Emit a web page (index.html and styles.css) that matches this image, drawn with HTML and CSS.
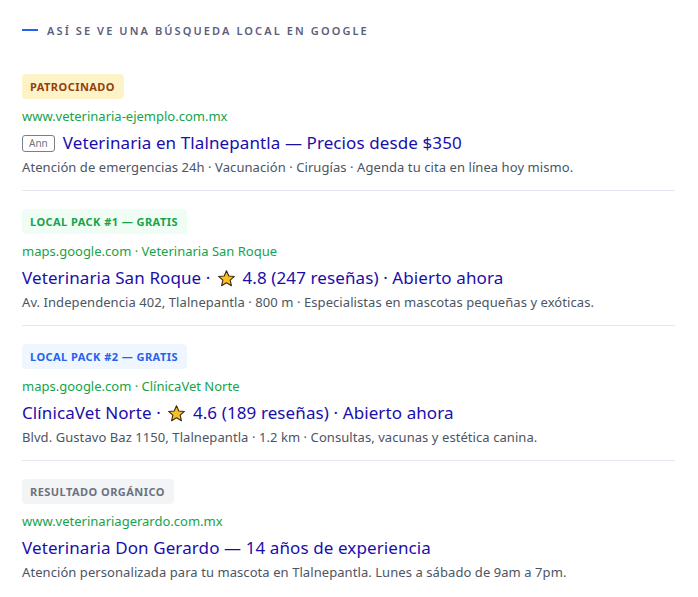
FILE: index.html
```html
<!DOCTYPE html>
<html lang="es">
<head>
<meta charset="utf-8">
<title>Búsqueda local en Google</title>
<link rel="stylesheet" href="styles.css">
</head>
<body>
<main class="serp">
  <header class="eyebrow">
    <span class="eyebrow-line"></span>
    <span class="eyebrow-text">Así se ve una búsqueda local en Google</span>
  </header>

  <section class="result">
    <span class="tag tag-ad">Patrocinado</span>
    <div class="url">www.veterinaria-ejemplo.com.mx</div>
    <h2 class="title"><span class="ad-mark">Ann</span>Veterinaria en Tlalnepantla — Precios desde $350</h2>
    <p class="desc">Atención de emergencias 24h · Vacunación · Cirugías · Agenda tu cita en línea hoy mismo.</p>
  </section>

  <section class="result">
    <span class="tag tag-pack1">Local Pack #1 — Gratis</span>
    <div class="url">maps.google.com · Veterinaria San Roque</div>
    <h2 class="title">Veterinaria San Roque · <svg class="star" viewBox="0 0 24 24"><path d="M12 2.2l2.9 6.6 7.1.6-5.4 4.7 1.6 7-6.2-3.7-6.2 3.7 1.6-7L2 9.4l7.1-.6z"/></svg> 4.8 (247 reseñas) · Abierto ahora</h2>
    <p class="desc">Av. Independencia 402, Tlalnepantla · 800 m · Especialistas en mascotas pequeñas y exóticas.</p>
  </section>

  <section class="result">
    <span class="tag tag-pack2">Local Pack #2 — Gratis</span>
    <div class="url">maps.google.com · ClínicaVet Norte</div>
    <h2 class="title">ClínicaVet Norte · <svg class="star" viewBox="0 0 24 24"><path d="M12 2.2l2.9 6.6 7.1.6-5.4 4.7 1.6 7-6.2-3.7-6.2 3.7 1.6-7L2 9.4l7.1-.6z"/></svg> 4.6 (189 reseñas) · Abierto ahora</h2>
    <p class="desc">Blvd. Gustavo Baz 1150, Tlalnepantla · 1.2 km · Consultas, vacunas y estética canina.</p>
  </section>

  <section class="result">
    <span class="tag tag-organic">Resultado orgánico</span>
    <div class="url">www.veterinariagerardo.com.mx</div>
    <h2 class="title">Veterinaria Don Gerardo — 14 años de experiencia</h2>
    <p class="desc">Atención personalizada para tu mascota en Tlalnepantla. Lunes a sábado de 9am a 7pm.</p>
  </section>
</main>
</body>
</html>
```

FILE: styles.css
```css
* {
  box-sizing: border-box;
}

body {
  margin: 0;
  background: #ffffff;
  font-family: "Noto Sans", "DejaVu Sans", sans-serif;
  color: #4b5563;
}

.serp {
  width: 653px;
  margin-left: 22px;
  padding-top: 21px;
}

.eyebrow {
  display: flex;
  align-items: center;
  gap: 9px;
  height: 18px;
  margin-bottom: 35px;
}

.eyebrow-line {
  width: 16px;
  height: 2px;
  background: #2563eb;
}

.eyebrow-text {
  font-size: 11px;
  font-weight: 600;
  letter-spacing: 2.1px;
  text-transform: uppercase;
  color: #5b6079;
}

.result {
  display: flex;
  flex-direction: column;
  align-items: flex-start;
  padding: 0 0 14px;
  margin-bottom: 18px;
  border-bottom: 1px solid #e5e8f0;
}

.result:last-child {
  border-bottom: none;
}

.tag {
  display: inline-block;
  height: 25px;
  line-height: 25px;
  padding: 0 9px 0 8px;
  border-radius: 4px;
  font-size: 11px;
  font-weight: 700;
  text-transform: uppercase;
  letter-spacing: 0.45px;
}

.tag-ad {
  background: #fef3c7;
  color: #92400e;
}

.tag-pack1 {
  background: #f0fdf4;
  color: #16a34a;
}

.tag-pack2 {
  background: #eff6ff;
  color: #2563eb;
}

.tag-organic {
  background: #f3f4f6;
  color: #6b7280;
}

.url {
  margin-top: 9px;
  font-size: 13px;
  line-height: 17px;
  color: #16a34a;
}

.title {
  display: flex;
  align-items: center;
  margin: 7px 0 0;
  font-size: 17px;
  font-weight: 400;
  letter-spacing: 0.1px;
  line-height: 22px;
  color: #1a0dab;
  white-space: pre;
}

.ad-mark {
  display: inline-block;
  height: 17px;
  line-height: 15px;
  padding: 0 6px;
  margin-right: 8px;
  border: 1px solid #7b7f8a;
  border-radius: 3px;
  font-size: 10px;
  letter-spacing: 0;
  color: #6b7280;
}

.star {
  width: 19px;
  height: 19px;
  margin: 0 2px;
}

.star path {
  fill: #fbbf24;
  stroke: #3a2a10;
  stroke-width: 1.4;
  stroke-linejoin: round;
}

.desc {
  margin: 4px 0 0;
  font-size: 13px;
  letter-spacing: 0.07px;
  line-height: 18px;
  color: #4b5563;
}
```
